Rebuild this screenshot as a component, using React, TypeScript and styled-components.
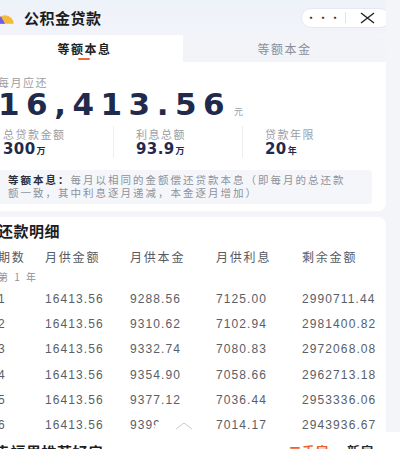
import React from "react";
import styled, { createGlobalStyle } from "styled-components";

type RowType = {
    no: string
    pay: string
    principal: string
    interest: string
    rest: string
}

const rows: RowType[] = [
    { no: "1", pay: "16413.56", principal: "9288.56", interest: "7125.00", rest: "2990711.44" },
    { no: "2", pay: "16413.56", principal: "9310.62", interest: "7102.94", rest: "2981400.82" },
    { no: "3", pay: "16413.56", principal: "9332.74", interest: "7080.83", rest: "2972068.08" },
    { no: "4", pay: "16413.56", principal: "9354.90", interest: "7058.66", rest: "2962713.18" },
    { no: "5", pay: "16413.56", principal: "9377.12", interest: "7036.44", rest: "2953336.06" },
    { no: "6", pay: "16413.56", principal: "9399.39", interest: "7014.17", rest: "2943936.67" },
]

const stats = [
    { label: "总贷款金额", value: "300", unit: "万" },
    { label: "利息总额", value: "93.9", unit: "万" },
    { label: "贷款年限", value: "20", unit: "年" },
]

export default function App() {
    return (
        <>
            <Global/>
            <Page>
                <Header>
                    <Brand>
                        <Logo viewBox="0 0 30 16">
                            <path d="M2 16 A13 13 0 0 1 28 16 Z" fill="#f6b93b"/>
                            <path d="M2 16 A13 13 0 0 1 9 5 L15 16 Z" fill="#6c5ce7"/>
                        </Logo>
                        <HeaderTitle>公积金贷款</HeaderTitle>
                    </Brand>
                    <Capsule>
                        <CapsuleBtn>···</CapsuleBtn>
                        <CapsuleLine/>
                        <CapsuleBtn>
                            <svg width="15" height="12" viewBox="0 0 15 12">
                                <path d="M1 1 L14 11 M14 1 L1 11" stroke="#222" strokeWidth="1.4" fill="none"/>
                            </svg>
                        </CapsuleBtn>
                    </Capsule>
                </Header>

                <Card>
                    <Tabs>
                        <Tab $active>等额本息<Underline/></Tab>
                        <Tab>等额本金</Tab>
                    </Tabs>
                    <Body>
                        <SmallLabel>每月应还</SmallLabel>
                        <Amount>16,413.56<Yuan>元</Yuan></Amount>
                        <Stats>
                            {stats.map((s, i) => (
                                <Stat key={s.label} $first={i === 0}>
                                    <SmallLabel>{s.label}</SmallLabel>
                                    <StatValue>{s.value}<StatUnit>{s.unit}</StatUnit></StatValue>
                                </Stat>
                            ))}
                        </Stats>
                        <Note>
                            <b>等额本息：</b>每月以相同的金额偿还贷款本息（即每月的总还款额一致，其中利息逐月递减，本金逐月增加）
                        </Note>
                    </Body>
                </Card>

                <Card $gap>
                    <TableTitle>还款明细</TableTitle>
                    <Grid>
                        <HeadCell>期数</HeadCell>
                        <HeadCell>月供金额</HeadCell>
                        <HeadCell>月供本金</HeadCell>
                        <HeadCell>月供利息</HeadCell>
                        <HeadCell>剩余金额</HeadCell>
                    </Grid>
                    <YearLabel>第 1 年</YearLabel>
                    {rows.map(r => (
                        <Grid key={r.no} $row>
                            <Cell>{r.no}</Cell>
                            <Cell>{r.pay}</Cell>
                            <Cell>{r.principal}</Cell>
                            <Cell>{r.interest}</Cell>
                            <Cell>{r.rest}</Cell>
                        </Grid>
                    ))}
                </Card>
            </Page>

            <BottomSheet>
                <Handle>
                    <svg width="18" height="8" viewBox="0 0 18 8">
                        <path d="M1 7 L9 1 L17 7" stroke="#c8c8c8" strokeWidth="1" fill="none"/>
                    </svg>
                </Handle>
                <SheetBar>
                    <SheetTitle>幸福里推荐好房</SheetTitle>
                    <SheetTabs>
                        <SheetTab $active>二手房</SheetTab>
                        <SheetTab>新房</SheetTab>
                    </SheetTabs>
                </SheetBar>
            </BottomSheet>
        </>
    );
}

const Global = createGlobalStyle`
body {
    margin: 0;
    background: #f4f5f9;
    font-family: "Noto Sans CJK SC", "Liberation Sans", sans-serif;
    overflow: hidden;
}
`

const Page = styled.div`
width: 400px;
height: 449px;
overflow: hidden;
margin-left: -14px;
display: flex;
flex-direction: column;
background: linear-gradient(180deg, #eef2f9 0px, #f4f5f9 60px);
`

const Header = styled.div`
flex: 0 0 35px;
display: flex;
align-items: center;
justify-content: space-between;
padding: 0 0 0 9px;
`

const Brand = styled.div`
display: flex;
align-items: center;
gap: 9px;
`

const Logo = styled.svg`
width: 20px;
height: 11px;
margin-top: 2px;
`

const HeaderTitle = styled.div`
font-size: 15px;
font-weight: 700;
color: #1c1c1c;
letter-spacing: 0.5px;
`

const Capsule = styled.div`
display: flex;
align-items: center;
width: 87px;
height: 18px;
margin-right: -4px;
background: #fff;
border: 1px solid #e6e9ef;
border-radius: 10px;
`

const CapsuleBtn = styled.div`
flex: 1;
display: flex;
align-items: center;
justify-content: center;
font-size: 11px;
letter-spacing: 1px;
color: #333;
line-height: 1;
`

const CapsuleLine = styled.div`
width: 1px;
height: 11px;
background: #e2e2e2;
`

const Card = styled.div<{ $gap?: boolean }>`
flex: 0 0 auto;
background: #fff;
border-radius: 8px;
overflow: hidden;
margin-top: ${p => p.$gap ? "6px" : "0"};
`

const Tabs = styled.div`
display: flex;
height: 27px;
`

const Tab = styled.div<{ $active?: boolean }>`
position: relative;
flex: ${p => p.$active ? "0 0 197px" : "1"};
display: flex;
align-items: center;
justify-content: center;
font-size: 12px;
letter-spacing: 1.5px;
font-weight: ${p => p.$active ? 700 : 400};
color: ${p => p.$active ? "#222" : "#8a8f99"};
background: ${p => p.$active ? "#fff" : "#f2f4f8"};
border-top-right-radius: ${p => p.$active ? "0" : "8px"};
`

const Underline = styled.span`
position: absolute;
left: 50%;
bottom: 2px;
width: 12px;
margin-left: -7px;
height: 2px;
border-radius: 1px;
background: #ef6b3a;
`

const Body = styled.div`
padding: 13px 14px 7px 12px;
display: flex;
flex-direction: column;
`

const SmallLabel = styled.div`
font-size: 11px;
letter-spacing: 1.5px;
color: #9a9ea6;
line-height: 14px;
`

const Amount = styled.div`
font-family: "DejaVu Sans", sans-serif;
font-size: 31px;
font-weight: 700;
letter-spacing: 6.5px;
color: #1f2a4d;
line-height: 30px;
height: 30px;
white-space: nowrap;
`

const Yuan = styled.span`
font-family: "Noto Sans CJK SC", sans-serif;
font-size: 9px;
font-weight: 400;
letter-spacing: 0;
line-height: 1;
color: #9a9ea6;
margin-left: 3px;
`

const Stats = styled.div`
display: grid;
grid-template-columns: 110px 129px 1fr;
margin-top: 7px;
padding-left: 5px;
`

const Stat = styled.div<{ $first?: boolean }>`
display: flex;
flex-direction: column;
padding: 1px 0 1px ${p => p.$first ? "0" : "22px"};
border-left: ${p => p.$first ? "none" : "1px solid #eceef2"};
`

const StatValue = styled.div`
font-family: "DejaVu Sans", sans-serif;
font-size: 15px;
font-weight: 700;
letter-spacing: 0.4px;
color: #1f2a4d;
line-height: 16px;
`

const StatUnit = styled.span`
font-family: "Noto Sans CJK SC", sans-serif;
font-size: 9px;
font-weight: 700;
line-height: 1;
margin-left: 1px;
`

const Note = styled.div`
margin-top: 12px;
padding: 4px 20px 5px 10px;
background: #f5f6fa;
border-radius: 4px;
font-size: 10.5px;
letter-spacing: 2px;
line-height: 12.5px;
color: #8d929b;
b {
    color: #2a2f3a;
    font-weight: 700;
}
`

const TableTitle = styled.div`
padding: 3px 12px 0;
font-size: 15px;
font-weight: 700;
color: #1d1d1d;
letter-spacing: 0.5px;
line-height: 22px;
`

const Grid = styled.div<{ $row?: boolean }>`
display: grid;
grid-template-columns: 47px 85px 86px 86px 1fr;
padding: 0 12px;
height: ${p => p.$row ? "25.3px" : "28px"};
align-items: center;
`

const HeadCell = styled.div`
font-size: 12px;
letter-spacing: 1.8px;
color: #555a63;
`

const YearLabel = styled.div`
padding: 0 12px;
margin-bottom: 2px;
font-size: 10px;
letter-spacing: 2px;
color: #8d929b;
line-height: 14px;
`

const Cell = styled.div`
font-family: "Liberation Sans", sans-serif;
font-size: 12px;
letter-spacing: 1.1px;
color: #595e67;
`

const BottomSheet = styled.div`
position: fixed;
left: 0;
right: 0;
top: 419px;
display: flex;
flex-direction: column;
align-items: center;
`

const Handle = styled.div`
width: 60px;
height: 13px;
margin-left: -32px;
background: #fff;
border-radius: 12px 12px 0 0;
display: flex;
align-items: center;
justify-content: center;
`

const SheetBar = styled.div`
align-self: stretch;
height: 40px;
background: #fff;
display: flex;
justify-content: space-between;
padding: 9px 26px 0 0;
margin-left: -5px;
`

const SheetTitle = styled.div`
font-size: 15px;
font-weight: 700;
color: #1d1d1d;
letter-spacing: 0.5px;
`

const SheetTabs = styled.div`
display: flex;
gap: 18px;
`

const SheetTab = styled.div<{ $active?: boolean }>`
font-size: 13px;
font-weight: 700;
letter-spacing: 0.5px;
color: ${p => p.$active ? "#f0602e" : "#2a2a2a"};
`
